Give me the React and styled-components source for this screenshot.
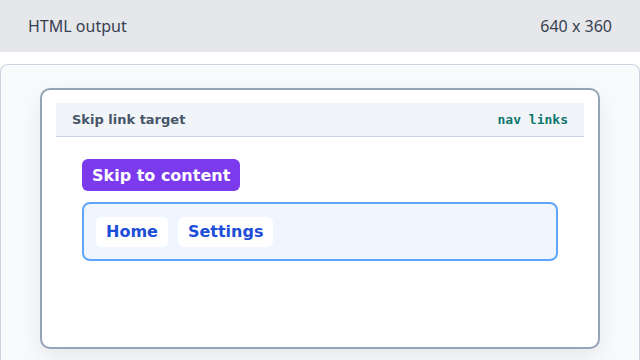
import styled, { createGlobalStyle } from 'styled-components';

const Global = createGlobalStyle`
  html, body { margin: 0; padding: 0; background: #ffffff; }
  body { width: 640px; height: 360px; overflow: hidden; }
`;

const TopBar = styled.header`
  height: 52px;
  background: #e5e7eb;
  display: flex;
  align-items: center;
  justify-content: space-between;
  padding: 0 28px;
  box-sizing: border-box;
  font-family: "Noto Sans", "Open Sans", sans-serif;
  font-size: 16px;
  color: #374151;
`;

const Stage = styled.main`
  margin-top: 12px;
  height: 296px;
  background: #f8fafc;
  border: 1px solid #cbd5e1;
  border-bottom: none;
  border-radius: 8px 8px 0 0;
  padding: 23px 39px 0 39px;
  box-sizing: border-box;
`;

const Card = styled.section`
  height: 261px;
  background: #ffffff;
  border: 2px solid #94a3b8;
  border-radius: 10px;
  box-shadow: 0 8px 24px rgba(15, 23, 42, 0.08);
  padding: 13px 14px;
  box-sizing: border-box;
  font-family: "DejaVu Sans", sans-serif;
`;

const CardHead = styled.div`
  height: 34px;
  background: #f1f5f9;
  border-bottom: 1px solid #cbd5e1;
  display: flex;
  align-items: center;
  justify-content: space-between;
  padding: 0 16px;
  box-sizing: border-box;
`;

const HeadTitle = styled.span`
  font-size: 13px;
  font-weight: 700;
  color: #475569;
`;

const HeadTag = styled.span`
  font-family: "DejaVu Sans Mono", monospace;
  font-size: 13px;
  font-weight: 700;
  color: #0f766e;
`;

const Body = styled.div`
  padding: 22px 26px 0 26px;
  display: flex;
  flex-direction: column;
  align-items: flex-start;
  gap: 11px;
`;

const SkipLink = styled.a`
  display: block;
  background: #7c3aed;
  color: #ffffff;
  font-size: 16px;
  font-weight: 700;
  line-height: 20px;
  padding: 7px 10px 5px;
  border-radius: 6px;
  text-decoration: none;
`;

const Nav = styled.nav`
  align-self: stretch;
  display: flex;
  gap: 10px;
  padding: 13px 12px 12px;
  background: #eff6ff;
  border: 2px solid #60a5fa;
  border-radius: 8px;
`;

const NavLink = styled.a`
  background: #ffffff;
  color: #1d4ed8;
  font-size: 16px;
  font-weight: 700;
  line-height: 20px;
  padding: 5px 10px;
  border-radius: 6px;
  text-decoration: none;
`;

export default function App() {
  return (
    <>
      <Global />
      <TopBar>
        <span>HTML output</span>
        <span>640 x 360</span>
      </TopBar>
      <Stage>
        <Card>
          <CardHead>
            <HeadTitle>Skip link target</HeadTitle>
            <HeadTag>nav links</HeadTag>
          </CardHead>
          <Body>
            <SkipLink href="#content">Skip to content</SkipLink>
            <Nav>
              <NavLink href="#home">Home</NavLink>
              <NavLink href="#settings">Settings</NavLink>
            </Nav>
          </Body>
        </Card>
      </Stage>
    </>
  );
}
